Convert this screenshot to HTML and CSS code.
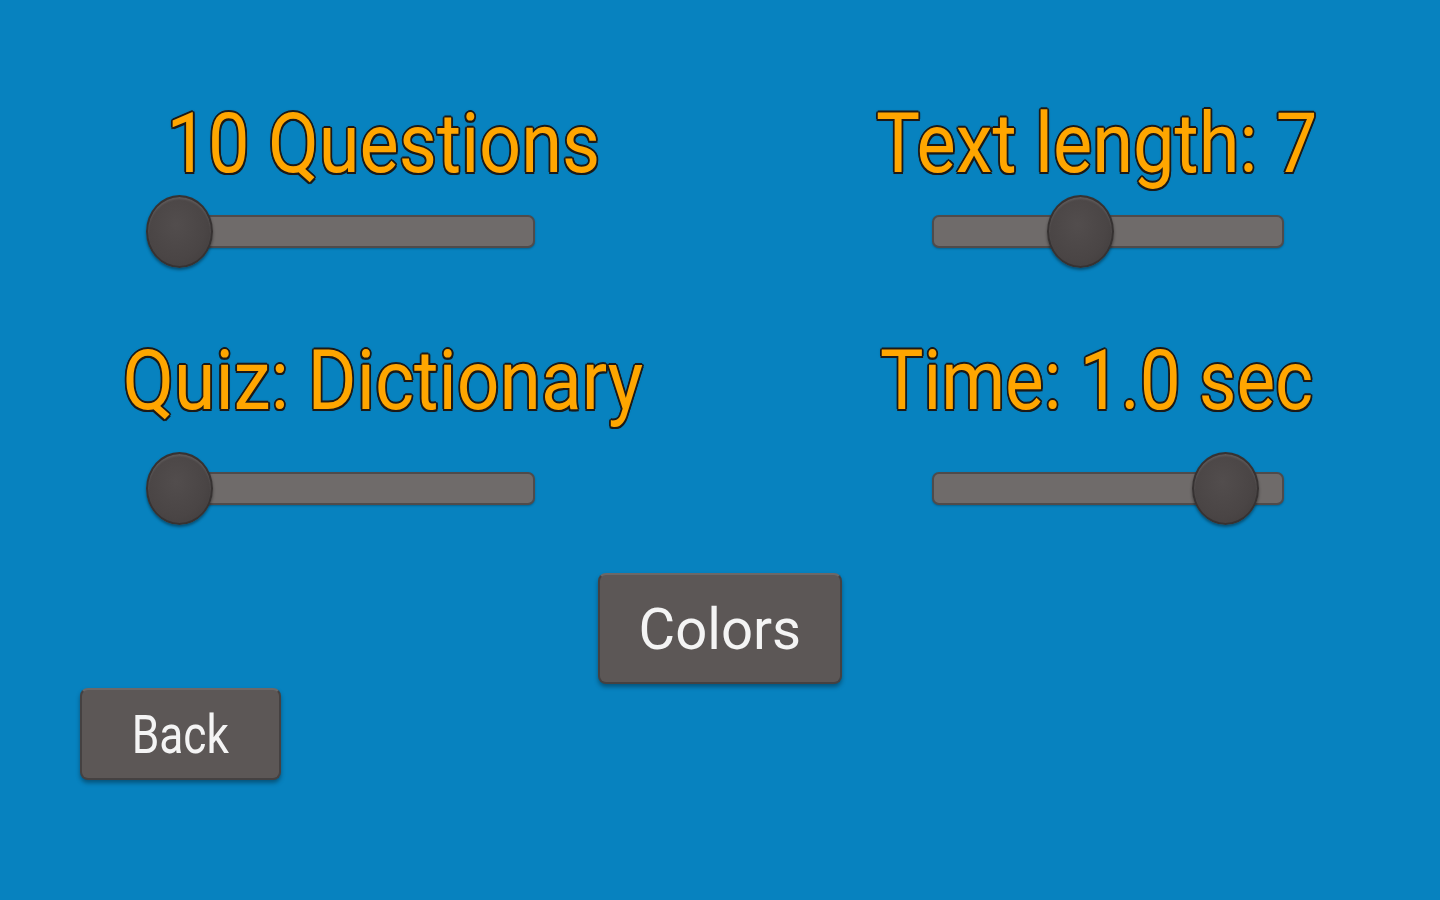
FILE: index.html
```html
<!DOCTYPE html>
<html lang="en">
<head>
<meta charset="utf-8">
<title>Settings</title>
<link rel="stylesheet" href="styles.css">
</head>
<body>
<main class="screen">
  <section class="settings">
    <div class="cell cell--left">
      <div class="label"><span class="label__text">10 Questions</span></div>
      <div class="slider slider--left"><div class="slider__track"></div><div class="slider__thumb" style="--p:0"></div></div>
    </div>
    <div class="cell cell--right">
      <div class="label"><span class="label__text">Text length: 7</span></div>
      <div class="slider slider--right"><div class="slider__track"></div><div class="slider__thumb" style="--p:0.41"></div></div>
    </div>
    <div class="cell cell--left cell--lower">
      <div class="label"><span class="label__text label__text--wide">Quiz: Dictionary</span></div>
      <div class="slider slider--left"><div class="slider__track"></div><div class="slider__thumb" style="--p:0"></div></div>
    </div>
    <div class="cell cell--right cell--lower">
      <div class="label"><span class="label__text label__text--narrow">Time: 1.0 sec</span></div>
      <div class="slider slider--right"><div class="slider__track"></div><div class="slider__thumb" style="--p:0.917"></div></div>
    </div>
  </section>
  <div class="actions">
    <button class="btn btn--colors"><span class="btn__text">Colors</span></button>
  </div>
  <div class="back-row">
    <button class="btn btn--back"><span class="btn__text">Back</span></button>
  </div>
</main>
</body>
</html>
```

FILE: styles.css
```css
* { box-sizing: border-box; }

html, body {
  margin: 0;
  padding: 0;
  width: 1440px;
  height: 900px;
  overflow: hidden;
  background: #0782bf;
  font-family: Roboto, "Noto Sans", sans-serif;
}

.screen {
  padding-top: 94px;
  height: 900px;
}

.settings {
  display: grid;
  grid-template-columns: 766px 674px;
  row-gap: 63px;
}

.cell {
  display: flex;
  flex-direction: column;
}

.cell--right {
  padding-right: 12px;
}

.label {
  height: 100px;
  display: flex;
  justify-content: center;
  font-size: 84px;
  line-height: 100px;
  color: #ffa600;
  white-space: nowrap;
  margin-bottom: 1px;
}

.cell--lower .label {
  margin-bottom: 21px;
}

.label__text {
  display: inline-block;
  transform: scaleX(0.88);
  text-shadow:
    2px 0 0 #1c1a18, -2px 0 0 #1c1a18, 0 2px 0 #1c1a18, 0 -2px 0 #1c1a18,
    1.5px 1.5px 0 #1c1a18, -1.5px 1.5px 0 #1c1a18, 1.5px -1.5px 0 #1c1a18, -1.5px -1.5px 0 #1c1a18,
    0 0 3px rgba(0, 0, 0, 0.6);
}

.label__text--wide {
  transform: scaleX(0.892);
}

.label__text--narrow {
  transform: scaleX(0.868);
}

.slider {
  position: relative;
  height: 73px;
  display: flex;
  align-items: center;
}

.slider--left {
  margin-left: 148px;
  width: 387px;
}

.slider--right {
  margin-left: 166px;
  width: 352px;
}

.slider__track {
  width: 100%;
  height: 33px;
  background: #6f6b6a;
  border: 2px solid #4f4b4b;
  border-radius: 7px;
  box-shadow: 0 1px 2px rgba(0, 0, 0, 0.25);
}

.slider__thumb {
  position: absolute;
  top: 0;
  left: calc(var(--p) * (100% - 66px) - 2px);
  width: 67px;
  height: 73px;
  border-radius: 50%;
  background: radial-gradient(ellipse at 45% 40%, #524d4d 0%, #4a4545 60%, #3f3b3b 100%);
  border: 2px solid #363232;
  box-shadow: 0 2px 3px rgba(0, 0, 0, 0.4), inset 0 2px 2px rgba(255, 255, 255, 0.1);
}

.actions {
  display: flex;
  justify-content: center;
  margin-top: 48px;
}

.back-row {
  display: flex;
  margin-top: 4px;
  padding-left: 80px;
}

.btn {
  display: flex;
  align-items: center;
  justify-content: center;
  background: #5c5756;
  border: 2px solid #454141;
  border-top-color: #6c6867;
  border-radius: 8px;
  box-shadow: 0 3px 4px rgba(0, 0, 0, 0.35);
  color: #f4f4f4;
  font-family: Roboto, "Noto Sans", sans-serif;
  padding: 0;
  white-space: nowrap;
}

.btn--colors {
  width: 244px;
  height: 111px;
  font-size: 58px;
}

.btn--back {
  width: 201px;
  height: 92px;
  font-size: 54px;
}

.btn__text {
  display: inline-block;
}

.btn--colors .btn__text {
  transform: scaleX(0.97);
}

.btn--back .btn__text {
  transform: scaleX(0.82);
}
```
